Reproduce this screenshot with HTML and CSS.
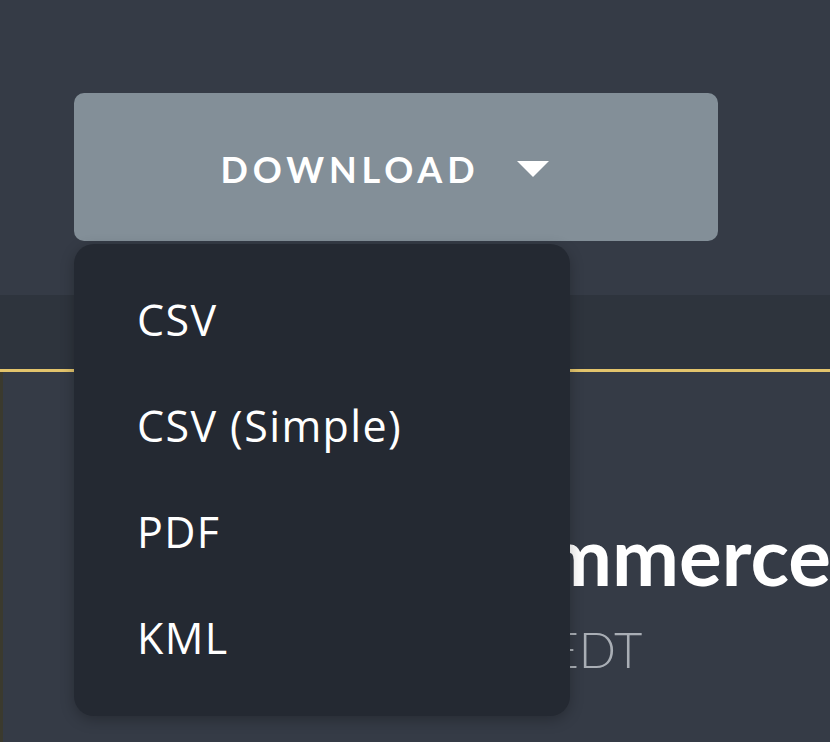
FILE: index.html
```html
<!DOCTYPE html>
<html lang="en">
<head>
    <meta charset="UTF-8">
    <meta name="viewport" content="width=device-width, initial-scale=1.0">
    <title>Event Download</title>
    <link rel="stylesheet" href="styles.css">
</head>
<body>
    <div class="toolbar">
        <div class="dropdown">
            <button class="download-btn">
                <span class="btn-label">Download</span>
                <span class="caret"></span>
            </button>
            <ul class="menu">
                <li>CSV</li>
                <li>CSV (Simple)</li>
                <li>PDF</li>
                <li>KML</li>
            </ul>
        </div>
    </div>
    <div class="band"></div>
    <div class="content">
        <div class="event">
            <h1 class="event-title">Commerce</h1>
            <p class="event-time">1:00 PM EDT</p>
        </div>
    </div>
</body>
</html>
```

FILE: styles.css
```css
body {
    margin: 0;
    background-color: #353b46;
    font-family: Lato, "Open Sans", sans-serif;
    color: #fff;
    height: 742px;
    overflow: hidden;
}
.toolbar {
    padding: 93px 0 0 74px;
    height: 295px;
    box-sizing: border-box;
}
.dropdown { position: relative; width: 644px; }
.download-btn {
    width: 644px;
    height: 148px;
    border: none;
    border-radius: 10px;
    background-color: #838f98;
    color: #fff;
    display: flex;
    align-items: center;
    justify-content: center;
    gap: 38px;
    padding: 4px 22px 0 0;
    cursor: pointer;
    font-family: Lato, sans-serif;
}
.btn-label {
    font-size: 36px;
    font-weight: 700;
    letter-spacing: 0.135em;
    text-transform: uppercase;
}
.caret {
    width: 0;
    height: 0;
    border-left: 16px solid transparent;
    border-right: 16px solid transparent;
    border-top: 16px solid #fff;
}
.menu {
    position: absolute;
    top: 151px;
    left: 0;
    width: 496px;
    height: 472px;
    margin: 0;
    padding: 23px 0 0 63px;
    box-sizing: border-box;
    list-style: none;
    background-color: #242932;
    border-radius: 20px;
    box-shadow: 0 4px 14px rgba(0, 0, 0, 0.25);
    z-index: 2;
}
.menu li {
    font-family: "Open Sans", sans-serif;
    font-size: 43px;
    font-weight: 500;
    letter-spacing: 1.4px;
    line-height: 106px;
    height: 106px;
    color: #fff;
}
.band {
    height: 74px;
    background-color: #2e343d;
    border-bottom: 3px solid #e3c46c;
}
.content {
    height: 372px;
    border-left: 3px solid #3b3a2e;
    box-sizing: border-box;
}
.event { padding: 138px 0 0 444px; }
.event-title {
    margin: 0;
    font-size: 80px;
    font-weight: 700;
    line-height: 90px;
    white-space: nowrap;
}
.event-time {
    margin: 20px 0 0 -93px;
    font-size: 49px;
    font-weight: 300;
    color: #a9aeb5;
    white-space: nowrap;
}
```
